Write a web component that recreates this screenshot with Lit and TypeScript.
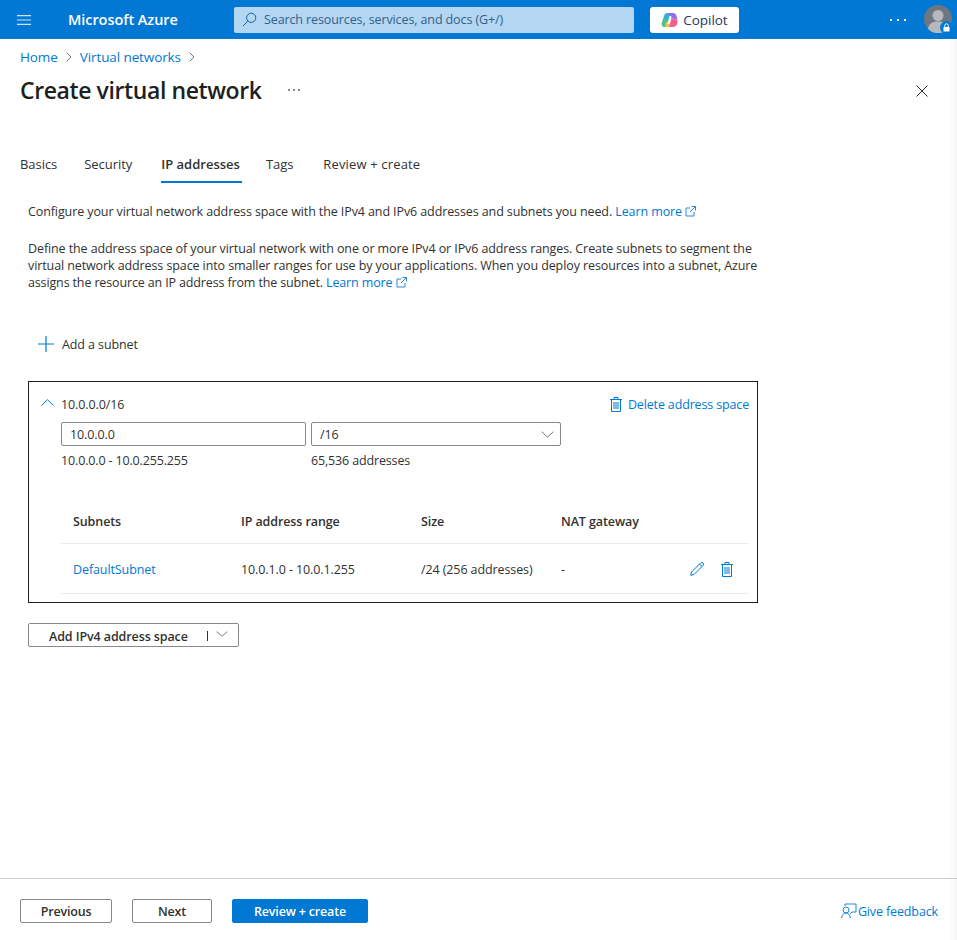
import { LitElement, html, css } from "lit";
import { customElement } from "lit/decorators.js";

const trash = html`<svg class="ic" width="12" height="15" viewBox="0 0 12 15" fill="none" stroke="#0078d4" stroke-width="1"><path d="M0 2.500h12M4 2.500V.5h4v2M1.500 2.500v12h9v-12M4 5v7M6 5v7M8 5v7"/></svg>`;
const ext = html`<svg class="ext" width="11" height="11" viewBox="0 0 11 11" fill="none" stroke="#2b88d8" stroke-width="1"><path d="M5 2H1v8h8V6M6.500.5h4v4M10.500.5 5 6"/></svg>`;
const chev = (w: number, h: number) => html`<svg width=${w} height=${h} viewBox="0 0 14 8" preserveAspectRatio="none" fill="none" stroke="#605e5c" stroke-width="1"><path d="M.8.8 7 7l6.200-6.200"/></svg>`;

@customElement("app-root")
export class AppRoot extends LitElement {
  static styles = css`
    :host { display: flex; flex-direction: column; height: 940px; position: relative; overflow: hidden; background: #fff;
      font-family: "Open Sans", "Noto Sans", sans-serif; font-size: 12.5px; color: #323130; letter-spacing: -0.1px; }
    a { color: #0078d4; text-decoration: none; }
    svg { display: block; flex: none; }
    .shade { position: absolute; top: 39px; right: 0; bottom: 0; width: 8px; background: linear-gradient(to right, rgba(0,0,0,0), rgba(0,0,0,.04)); pointer-events: none; }
    .top { height: 39px; background: #0078d4; display: flex; align-items: center; flex: none; color: #fff; }
    .menu { margin-left: 17px; }
    .brand { margin-left: 37px; width: 166px; font-size: 14.5px; font-weight: 600; letter-spacing: -0.06px; }
    .search { width: 400px; height: 26px; background: #b3d6f2; border-radius: 2px; display: flex; align-items: center; box-sizing: border-box; padding-left: 8px; color: #33608c; gap: 7px; font-size: 12.5px; letter-spacing: -0.11px; }
    .copilot { margin-left: 16px; width: 89px; height: 26px; background: #fff; border-radius: 3px; display: flex; align-items: center; justify-content: center; gap: 5px; color: #243a5e; font-weight: 500; font-size: 13.5px; letter-spacing: -0.05px; box-sizing: border-box; }
    .dots { margin-left: auto; margin-right: 18px; display: flex; gap: 5px; }
    .dots i { width: 2px; height: 2px; background: #fff; display: block; }
    .avatar { width: 28px; height: 28px; margin-right: 5px; margin-bottom: 1px; position: relative; }
    .lock { position: absolute; right: -1px; bottom: -1px; }
    .crumbs { display: flex; align-items: center; gap: 8px; margin: 9px 0 0 20px; height: 17px; font-size: 13.5px; }
    .title { display: flex; align-items: center; margin: 9px 0 0 20px; height: 32px; padding-right: 29px; flex: none; }
    h1 { margin: 0; font-size: 23px; font-weight: 600; color: #201f1e; letter-spacing: -0.4px; width: 268px; }
    .more { display: flex; gap: 3px; }
    .more i { width: 2px; height: 2px; background: #8a8886; display: block; }
    .close { margin-left: auto; margin-top: 2px; }
    .tabs { display: flex; margin: 40px 0 0 20px; height: 37px; font-size: 13px; flex: none; letter-spacing: -0.05px; }
    .tab { margin-right: 27px; padding-top: 9px; box-sizing: border-box; height: 37px; color: #323130; }
    .tab.sec { margin-right: 29px; }
    .tab.on { font-weight: 600; letter-spacing: 0; border-bottom: 2px solid #0078d4; margin-right: 24px; padding-right: 2px; }
    .tab.tags { margin-right: 30px; }
    .tab.rc { letter-spacing: 0.15px; }
    .body { margin: 0 0 0 28px; width: 730px; flex: 1; }
    p { margin: 0; line-height: 17px; }
    .p1 { margin-top: 20px; }
    .p2 { margin-top: 20px; width: 730px; }
    .p2 span { display: block; white-space: nowrap; }
    .p2 span.last { letter-spacing: -0.14px; }
    .ext { display: inline-block; vertical-align: -1px; }
    .add { display: flex; align-items: center; gap: 8px; margin: 44px 0 0 10px; height: 18px; }
    .box { margin-top: 28px; border: 1px solid #201f1e; height: 222px; box-sizing: border-box; padding: 0 8px 0 12px; }
    .boxhead { display: flex; align-items: center; height: 40px; }
    .boxhead .v { margin-left: 7px; margin-top: 4px; }
    .del { margin-left: auto; display: flex; align-items: center; gap: 6px; margin-top: 5px; letter-spacing: -0.15px; }
    .fields { display: flex; margin-left: 20px; gap: 5px; }
    .field { height: 24px; border: 1px solid #8a8886; border-radius: 2px; box-sizing: border-box; display: flex; align-items: center; }
    .f1 { width: 245px; padding-left: 8px; }
    .f2 { width: 250px; padding: 0 6px 0 8px; justify-content: space-between; }
    .hints { display: flex; margin: 6px 0 0 20px; height: 18px; line-height: 18px; letter-spacing: -0.15px; }
    .hints span:first-child { width: 250px; }
    .grid { margin: 29px 0 0 20px; }
    .row { display: grid; grid-template-columns: 168px 180px 140px 1fr auto; padding-left: 12px; align-items: center; border-bottom: 1px solid #edebe9; }
    .row.h { height: 44px; font-weight: 600; }
    .row.d { height: 50px; padding-top: 1px; box-sizing: border-box; }
    .acts { display: flex; gap: 17px; padding-right: 16px; align-items: center; }
    .addsp { margin-top: 20px; width: 211px; height: 24px; border: 1px solid #8a8886; border-radius: 2px; box-sizing: border-box; display: flex; align-items: center; font-weight: 600; padding: 2px 0 0 20px; color: #323130; letter-spacing: -0.1px; }
    .sep { width: 1px; height: 10px; background: #323130; margin-left: auto; margin-right: 8px; }
    .addsp svg { margin-right: 10px; margin-bottom: 4px; }
    .foot { flex: none; height: 62px; border-top: 1px solid #d2d0ce; display: flex; align-items: center; padding: 3px 19px 0 20px; box-sizing: border-box; }
    .btn { height: 24px; border: 1px solid #8a8886; border-radius: 2px; box-sizing: border-box; font-weight: 600; display: flex; align-items: center; justify-content: center; color: #323130; letter-spacing: -0.18px; }
    .prev { width: 92px; margin-right: 20px; }
    .next { width: 80px; margin-right: 20px; }
    .rev { width: 136px; background: #0078d4; border-color: #0078d4; color: #fff; }
    .fb { margin-left: auto; display: flex; align-items: center; gap: 1px; letter-spacing: -0.13px; }
  `;
  render() {
    return html`
      <div class="top">
        <svg class="menu" width="14" height="10" viewBox="0 0 14 10" stroke="#cfe4f7" stroke-width="1.200"><path d="M0 .6h14M0 5h14M0 9.400h14"/></svg>
        <div class="brand">Microsoft Azure</div>
        <div class="search">
          <svg width="15" height="15" viewBox="0 0 15 15" fill="none" stroke="#1f5f99" stroke-width="1"><circle cx="9.200" cy="5.800" r="4.600"/><path d="M5.800 9.200 1 14"/></svg>
          <span>Search resources, services, and docs (G+/)</span>
        </div>
        <div class="copilot">
          <svg width="17" height="16" viewBox="0 0 17 16">
            <path d="M6 1h5L7 15H4C1.500 15 .2 13 1 10.500L3 4c.5-2 1.500-3 3-3z" fill="#2fb5c9"/>
            <path d="M1 10.500 3 6l5 2-1 7H4c-2.500 0-3.800-2-3-4.500z" fill="#4cc38a"/>
            <path d="M4 15l1-5 4 0-1 5z" fill="#f8c13a"/>
            <path d="M6 1h6c2 0 3 1 3.500 3l1 4-6-2z" fill="#8f6cf2"/>
            <path d="M10.500 6 16.500 8c.5 4-1.500 7-4.500 7H8z" fill="#f0608c"/>
            <path d="M9.500 4 7.500 12" stroke="#fff" stroke-width="2"/>
          </svg>
          <span>Copilot</span>
        </div>
        <div class="dots"><i></i><i></i><i></i></div>
        <div class="avatar">
          <svg width="28" height="28" viewBox="0 0 28 28"><circle cx="14" cy="14" r="14" fill="#6e7781"/><circle cx="14" cy="10.500" r="5.500" fill="#b5b9be"/><path d="M4 24c1-6 5-7.500 10-7.500s9 1.500 10 7.500a14 14 0 0 1-20 0z" fill="#b5b9be"/></svg>
          <svg class="lock" width="13" height="13" viewBox="0 0 13 13"><circle cx="6.500" cy="6.500" r="6.500" fill="#0078d4"/><rect x="3.500" y="6" width="6" height="4.500" fill="#fff"/><path d="M4.800 6V4.500a1.700 1.700 0 0 1 3.400 0V6" fill="none" stroke="#fff"/></svg>
        </div>
      </div>
      <div class="crumbs">
        <a href="#">Home</a>
        <svg width="6" height="10" viewBox="0 0 6 10" fill="none" stroke="#7a7876"><path d="M.7.7 5 5 .7 9.300"/></svg>
        <a href="#">Virtual networks</a>
        <svg width="6" height="10" viewBox="0 0 6 10" fill="none" stroke="#7a7876"><path d="M.7.7 5 5 .7 9.300"/></svg>
      </div>
      <div class="title">
        <h1>Create virtual network</h1>
        <div class="more"><i></i><i></i><i></i></div>
        <svg class="close" width="12" height="12" viewBox="0 0 12 12" stroke="#323130"><path d="M.5.500l11 11M11.500.500l-11 11"/></svg>
      </div>
      <div class="tabs">
        <div class="tab">Basics</div>
        <div class="tab sec">Security</div>
        <div class="tab on">IP addresses</div>
        <div class="tab tags">Tags</div>
        <div class="tab rc">Review + create</div>
      </div>
      <div class="body">
        <p class="p1">Configure your virtual network address space with the IPv4 and IPv6 addresses and subnets you need. <a href="#">Learn more ${ext}</a></p>
        <p class="p2">
          <span>Define the address space of your virtual network with one or more IPv4 or IPv6 address ranges. Create subnets to segment the</span>
          <span>virtual network address space into smaller ranges for use by your applications. When you deploy resources into a subnet, Azure</span>
          <span class="last">assigns the resource an IP address from the subnet. <a href="#">Learn more ${ext}</a></span>
        </p>
        <div class="add">
          <svg width="16" height="16" viewBox="0 0 16 16" stroke="#0078d4" stroke-width="1.200"><path d="M8 0v16M0 8h16"/></svg>
          <span>Add a subnet</span>
        </div>
        <div class="box">
          <div class="boxhead">
            <svg width="13" height="7" viewBox="0 0 13 7" fill="none" stroke="#0078d4"><path d="M.5 6.500 6.500.7l6 5.800"/></svg>
            <span class="v">10.0.0.0/16</span>
            <a class="del" href="#">${trash}<span>Delete address space</span></a>
          </div>
          <div class="fields">
            <div class="field f1">10.0.0.0</div>
            <div class="field f2"><span>/16</span>${chev(13, 7)}</div>
          </div>
          <div class="hints"><span>10.0.0.0 - 10.0.255.255</span><span>65,536 addresses</span></div>
          <div class="grid">
            <div class="row h"><span>Subnets</span><span>IP address range</span><span>Size</span><span>NAT gateway</span><span></span></div>
            <div class="row d"><a href="#">DefaultSubnet</a><span>10.0.1.0 - 10.0.1.255</span><span>/24 (256 addresses)</span><span>-</span>
              <div class="acts">
                <svg width="14" height="14" viewBox="0 0 14 14" fill="none" stroke="#0078d4"><path d="M.7 13.300 1.500 10 10.500 1a1.700 1.700 0 0 1 2.500 2.500L4 12.500zM9.500 2l2.500 2.500"/></svg>
                ${trash}
              </div>
            </div>
          </div>
        </div>
        <div class="addsp"><span>Add IPv4 address space</span><i class="sep"></i>${chev(12, 6)}</div>
      </div>
      <div class="foot">
        <div class="btn prev">Previous</div>
        <div class="btn next">Next</div>
        <div class="btn rev">Review + create</div>
        <a class="fb" href="#">
          <svg width="16" height="16" viewBox="0 0 16 16" fill="none" stroke="#0078d4" stroke-width=".9"><path d="M4 3V1h11v8h-4l-2 2"/><circle cx="5" cy="7" r="3"/><path d="M.6 15c.4-3 2-5 4.400-5s4 2 4.400 5"/></svg>
          <span>Give feedback</span>
        </a>
      </div>
      <div class="shade"></div>
    `;
  }
}
